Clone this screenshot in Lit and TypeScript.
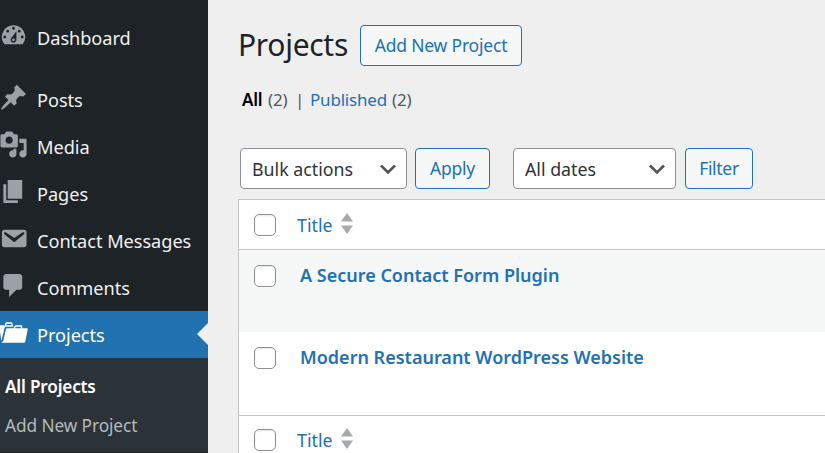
import { LitElement, html, css, svg } from "lit";
import { customElement, property } from "lit/decorators.js";
import { classMap } from "lit/directives/class-map.js";

const ICONS: Record<string, string> = {
  dashboard:
    "M3.76 16h12.48A7.998 7.998 0 0 0 10 3a7.998 7.998 0 0 0-6.24 13zM10 4c.55 0 1 .45 1 1s-.45 1-1 1-1-.45-1-1 .45-1 1-1zM6 6c.55 0 1 .45 1 1s-.45 1-1 1-1-.45-1-1 .45-1 1-1zm8 0c.55 0 1 .45 1 1s-.45 1-1 1-1-.45-1-1 .45-1 1-1zm-5.37 5.55L12 7v6c0 1.1-.9 2-2 2s-2-.9-2-2c0-.57.24-1.08.63-1.45zM4 10c.55 0 1 .45 1 1s-.45 1-1 1-1-.45-1-1 .45-1 1-1zm12 0c.55 0 1 .45 1 1s-.45 1-1 1-1-.45-1-1 .45-1 1-1zm-5 3c0-.55-.45-1-1-1s-1 .45-1 1 .45 1 1 1 1-.45 1-1z",
  post:
    "M10.44 3.02l1.82-1.82 6.36 6.35-1.83 1.82c-1.05-.68-2.48-.57-3.41.36l-.75.75c-.92.93-1.04 2.35-.35 3.41l-1.83 1.82-2.41-2.41-2.8 2.79c-.42.42-3.38 2.71-3.8 2.29s1.86-3.39 2.28-3.81l2.79-2.79L4.1 9.36l1.83-1.82c1.05.69 2.48.57 3.4-.36l.75-.75c.93-.92 1.05-2.35.36-3.41z",
  media:
    "M13 11V4c0-.55-.45-1-1-1h-1.67L9 1H5L3.67 3H2c-.55 0-1 .45-1 1v7c0 .55.45 1 1 1h10c.55 0 1-.45 1-1zM7 4.5c1.38 0 2.5 1.12 2.5 2.5S8.38 9.5 7 9.5 4.5 8.38 4.5 7 5.62 4.5 7 4.5zM14 6h5v10.5c0 1.38-1.12 2.5-2.5 2.5S14 17.88 14 16.5s1.12-2.5 2.5-2.5c.17 0 .34.02.5.05V9h-3V6zm-4 8.05V13h2v3.5c0 1.38-1.12 2.5-2.5 2.5S7 17.88 7 16.5 8.12 14 9.5 14c.17 0 .34.02.5.05z",
  page: "M6 15V2h10v13H6zm-1 1h8v2H3V5h2v11z",
  email:
    "M3.87 4h13.25C18.37 4 19 4.59 19 5.79v8.42c0 1.19-.63 1.79-1.88 1.79H3.87c-1.25 0-1.88-.6-1.88-1.79V5.79c0-1.2.63-1.79 1.88-1.79zm6.62 8.6l6.74-5.53c.24-.2.43-.66.13-1.07-.29-.41-.82-.42-1.17-.17l-5.7 3.86L4.8 5.83c-.35-.25-.88-.24-1.17.17-.3.41-.11.87.13 1.07z",
  comment:
    "M5 2h9c1.1 0 2 .9 2 2v7c0 1.1-.9 2-2 2h-2l-5 5v-5H5c-1.1 0-2-.9-2-2V4c0-1.1.9-2 2-2z",
  portfolio:
    "M4 5H.78c-.37 0-.74.32-.69.84l1.56 9.99S3.5 8.47 3.86 6.7c.11-.53.61-.7.98-.7H10s-.7-2.08-.77-2.31C9.11 3.25 8.89 3 8.45 3H5.14c-.36 0-.7.23-.8.64C4.25 4.04 4 5 4 5zm4.88 0h-4s.42-1 .87-1h2.13c.48 0 1 1 1 1zM2.67 16.25c-.31.47-.76.75-1.26.75h15.73c.54 0 .92-.31 1.03-.83.44-2.19 1.68-8.44 1.68-8.44.07-.5-.3-.73-.62-.73H16V5.53c0-.16-.26-.53-.66-.53h-3.76c-.52 0-.87.58-.87.58L10 7H5.59c-.32 0-.63.19-.69.5 0 0-1.59 6.7-1.72 7.33-.07.37-.22.99-.51 1.42zM15.39 7H11s.58-1 1.13-1h2.29c.53 0 .97 1 .97 1z",
};

const MENU = [
  { icon: "dashboard", label: "Dashboard", gap: true },
  { icon: "post", label: "Posts" },
  { icon: "media", label: "Media" },
  { icon: "page", label: "Pages" },
  { icon: "email", label: "Contact Messages" },
  { icon: "comment", label: "Comments" },
  { icon: "portfolio", label: "Projects", current: true },
];

const PROJECTS = ["A Secure Contact Form Plugin", "Modern Restaurant WordPress Website"];

@customElement("admin-menu")
class AdminMenu extends LitElement {
  static styles = css`
    :host { display: block; width: 208px; height: 453px; background: #1d2327; color: #f0f0f1; overflow: hidden; }
    .menu { padding-top: 14px; }
    .item { position: relative; display: flex; align-items: flex-start; height: 47px; }
    .item.gap { margin-bottom: 15px; }
    .item.current { background: #2271b1; color: #fff; }
    .icon { flex: none; width: 29px; height: 29px; margin: 7.4px 0 0 -1.5px; fill: #9ca1a8; }
    .current .icon { fill: #fff; }
    .label { margin-left: 9.5px; font-size: 18.2px; line-height: 48px; letter-spacing: -0.05px; white-space: nowrap; }
    .notch { position: absolute; right: 0; top: 12px; width: 11px; height: 22px; background: #efefef; clip-path: polygon(100% 0, 0 50%, 100% 100%); }
    .sub { box-sizing: border-box; height: 94px; padding: 10px 0 0 5px; background: #2c3338; }
    .subitem { font-size: 17.3px; line-height: 39px; color: #b4b9be; letter-spacing: -0.1px; }
    .subitem.on { font-size: 17.2px; font-weight: 600; color: #fff; letter-spacing: -0.2px; line-height: 38px; }
  `;
  render() {
    return html`
      <nav class="menu">
        ${MENU.map(
          (m) => html`<div class=${classMap({ item: true, gap: !!m.gap, current: !!m.current })}>
            <svg class="icon" viewBox="0 0 20 20">${svg`<path fill-rule="evenodd" d=${ICONS[m.icon]}></path>`}</svg>
            <span class="label">${m.label}</span>
            ${m.current ? html`<span class="notch"></span>` : ""}
          </div>`
        )}
        <div class="sub">
          <div class="subitem on">All Projects</div>
          <div class="subitem">Add New Project</div>
        </div>
      </nav>
    `;
  }
}

@customElement("wp-select")
class WpSelect extends LitElement {
  @property() label = "";
  static styles = css`
    :host { display: flex; align-items: center; justify-content: space-between; box-sizing: border-box; height: 41px; padding: 0 9px 0 11px; border: 1px solid #8c8f94; border-radius: 4px; background: #fff; color: #2c3338; font-size: 17.8px; }
    .chev { width: 18px; height: 18px; fill: none; stroke: #555; stroke-width: 2.6; }
  `;
  render() {
    return html`<span>${this.label}</span>
      <svg class="chev" viewBox="0 0 18 18"><path d="M2 5.5l7 7 7-7"></path></svg>`;
  }
}

@customElement("title-bar")
class TitleBar extends LitElement {
  static styles = css`
    :host { display: flex; align-items: center; height: 49px; padding-left: 15px; }
    .check { flex: none; box-sizing: border-box; width: 22px; height: 22px; border: 1px solid #8c8f94; border-radius: 5px; background: #fff; box-shadow: inset 0 1px 2px rgba(0, 0, 0, 0.1); }
    .title { margin-left: 21px; font-size: 17.8px; color: #2271b1; }
    .sort { width: 12px; height: 21px; margin: -3px 0 0 8px; fill: #a7aaad; }
  `;
  render() {
    return html`<span class="check"></span><span class="title">Title</span>
      <svg class="sort" viewBox="0 0 12 21"><path d="M6 0l6 8.5H0zM0 12.5h12L6 21z"></path></svg>`;
  }
}

@customElement("app-root")
class AppRoot extends LitElement {
  static styles = css`
    :host { display: flex; width: 825px; height: 453px; overflow: hidden; background: #efefef; font-family: "Noto Sans", "Open Sans", sans-serif; font-size: 17.5px; }
    .main { flex: 1; min-width: 0; padding: 25px 0 0 30px; }
    .head { display: flex; align-items: center; height: 41px; }
    .heading { width: 122px; margin: -1px 0 0; font-size: 30px; font-weight: 400; line-height: 40px; color: #1d2327; letter-spacing: -0.3px; }
    .btn { display: flex; align-items: center; justify-content: center; box-sizing: border-box; height: 41px; padding-bottom: 1px; border: 1px solid #2271b1; border-radius: 4px; background: #f6f7f7; color: #2271b1; letter-spacing: -0.2px; }
    .add { width: 162px; }
    .views { display: flex; height: 24px; line-height: 24px; margin: 22px 0 36px 4px; font-size: 17px; color: #50575e; letter-spacing: -0.2px; }
    .all { width: 26px; font-weight: 600; color: #000; }
    .num { width: 27px; }
    .sep { width: 15px; }
    .link { width: 82px; color: #2271b1; letter-spacing: -0.2px; }
    .bar { display: flex; padding-left: 2px; height: 41px; margin-bottom: 10px; }
    .bulk { width: 167px; margin-right: 8px; }
    .apply { width: 75px; margin-right: 23px; }
    .dates { width: 163px; margin-right: 9px; }
    .filter { width: 68px; letter-spacing: -0.3px; }
    .table { border: solid #c3c4c7; border-width: 1px 0 0 1px; background: #fff; }
    .top { border-bottom: 1px solid #c3c4c7; }
    .row { display: flex; align-items: flex-start; box-sizing: border-box; height: 82px; padding: 15px 0 0 15px; }
    .row.odd { background: #f6f7f7; }
    .row.last { height: 83px; }
    .check { flex: none; box-sizing: border-box; width: 22px; height: 22px; border: 1px solid #8c8f94; border-radius: 5px; background: #fff; box-shadow: inset 0 1px 2px rgba(0, 0, 0, 0.1); }
    .name { margin: -1px 0 0 24px; font-size: 18px; line-height: 22px; font-weight: 600; color: #2271b1; white-space: nowrap; }
    .bottom { height: 48px; border-top: 1px solid #c3c4c7; }
  `;
  render() {
    return html`
      <admin-menu></admin-menu>
      <main class="main">
        <div class="head">
          <h1 class="heading">Projects</h1>
          <div class="btn add">Add New Project</div>
        </div>
        <div class="views">
          <span class="all">All</span><span class="num">(2)</span><span class="sep">|</span>
          <span class="link">Published</span><span class="num">(2)</span>
        </div>
        <div class="bar">
          <wp-select class="bulk" label="Bulk actions"></wp-select>
          <div class="btn apply">Apply</div>
          <wp-select class="dates" label="All dates"></wp-select>
          <div class="btn filter">Filter</div>
        </div>
        <div class="table">
          <title-bar class="top"></title-bar>
          ${PROJECTS.map(
            (p, i) => html`<div class=${classMap({ row: true, odd: i % 2 === 0, last: i === PROJECTS.length - 1 })}>
              <span class="check"></span><span class="name">${p}</span>
            </div>`
          )}
          <title-bar class="bottom"></title-bar>
        </div>
      </main>
    `;
  }
}
